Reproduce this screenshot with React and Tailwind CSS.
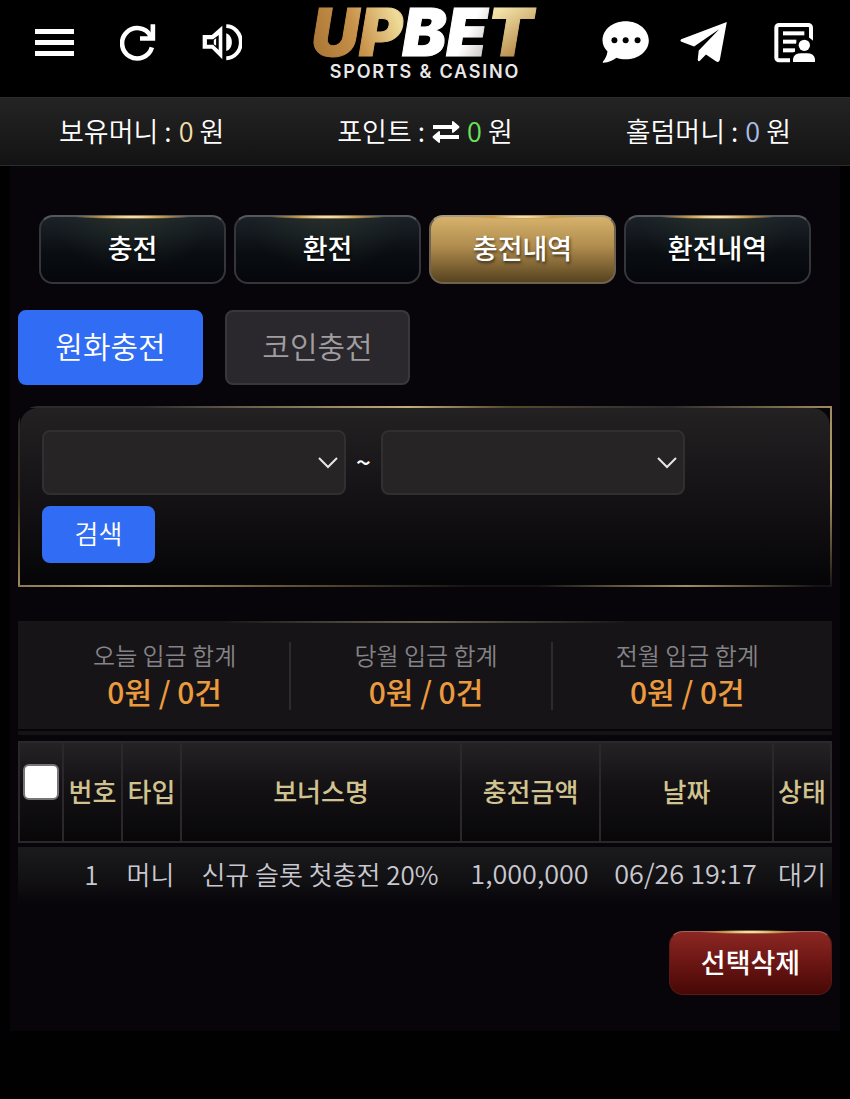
import { useState } from "react";

const TABS = ["충전", "환전", "충전내역", "환전내역"];

const SUMMARY = [
  { label: "오늘 입금 합계", value: "0원 / 0건" },
  { label: "당월 입금 합계", value: "0원 / 0건" },
  { label: "전월 입금 합계", value: "0원 / 0건" },
];

const COLUMNS = ["번호", "타입", "보너스명", "충전금액", "날짜", "상태"];

const ROWS = [
  { no: 1, type: "머니", bonus: "신규 슬롯 첫충전 20%", amount: "1,000,000", date: "06/26 19:17", status: "대기" },
];

// ── ICONS ─────────────────────────────────────────────────────
function MenuIcon() {
  return (
    <svg viewBox="0 0 40 28" className="w-10 h-7" fill="#fff" aria-hidden="true">
      <rect x="1" y="0" width="39" height="5" />
      <rect x="1" y="11" width="39" height="5" />
      <rect x="1" y="22" width="39" height="5" />
    </svg>
  );
}

function RefreshIcon() {
  return (
    <svg viewBox="0 0 108 112" className="w-9 h-[37px]" fill="none" stroke="#fff" strokeWidth="14" aria-hidden="true">
      <path d="M96 71A46 46 0 1 1 92 36" />
      <path d="M99 1V44H60" />
      <path d="M78 44L99 23V44Z" fill="#fff" stroke="none" />
    </svg>
  );
}

function SpeakerIcon() {
  return (
    <svg viewBox="0 0 122 118" className="w-10 h-[39px]" fill="#fff" aria-hidden="true">
      <path fillRule="evenodd" d="M2 36H30L62 8V110L30 78H2ZM15 49V66H34L51 82V36L34 49Z" />
      <path d="M36 51L43 46V69L36 64Z" />
      <path d="M74 31C84 34 91 45 91 58S84 82 74 85Z" />
      <path d="M74 9A40 44 0 0 1 74 107" fill="none" stroke="#fff" strokeWidth="12" />
    </svg>
  );
}

function ChatIcon() {
  return (
    <svg viewBox="0 0 144 130" className="w-12 h-[43px]" fill="#fff" aria-hidden="true">
      <path d="M71 1C32 1 1 26 1 59C1 72 7 83 16 92C15 105 8 115 2 123C1 125 2 126 4 126C20 125 34 119 43 111C52 114 61 116 71 116C110 116 141 91 141 59S110 1 71 1Z" />
      <circle cx="37" cy="58" r="9" fill="#000" />
      <circle cx="71" cy="58" r="9" fill="#000" />
      <circle cx="107" cy="58" r="9" fill="#000" />
    </svg>
  );
}

function PlaneIcon() {
  return (
    <svg viewBox="0 0 144 124" className="w-12 h-[41px]" fill="#fff" aria-hidden="true">
      <path d="M141 0L3 52Q-2 57 4 60L42 74L118 22L56 86L53 114Q55 122 61 116L78 98L108 119Q117 124 120 114Z" />
    </svg>
  );
}

function ProfileDocIcon() {
  return (
    <svg viewBox="0 0 126 120" className="w-[42px] h-10" fill="#fff" aria-hidden="true">
      <rect x="7" y="6" width="104" height="106" rx="8" fill="none" stroke="#fff" strokeWidth="12" />
      <rect x="27" y="25" width="64" height="12" />
      <rect x="27" y="50" width="40" height="12" />
      <rect x="27" y="76" width="36" height="12" />
      <path d="M48 120V104Q52 88 68 84A29 29 0 0 1 114 50L126 62V120Z" fill="#000" />
      <circle cx="91" cy="67" r="17" />
      <path d="M57 117V107Q61 91 82 91H99Q119 91 123 107V117Z" />
    </svg>
  );
}

function SwapIcon() {
  return (
    <svg viewBox="0 0 28 22" className="w-7 h-[22px]" fill="#fff" aria-hidden="true">
      <path d="M1 4H20V1Q20 0 21 0L27 5Q28 6 27 7L21 12Q20 12 20 11V8H1Z" />
      <path d="M27 14H8V11Q8 10 7 10L1 15Q0 16 1 17L7 22Q8 22 8 21V18H27Z" />
    </svg>
  );
}

// ── PIECES ────────────────────────────────────────────────────
function Logo() {
  return (
    <a href="#home" aria-label="UPBET Sports & Casino">
      <svg viewBox="0 0 250 80" className="w-[250px] h-20 font-['Inter',sans-serif]" textAnchor="middle">
        <defs>
          <linearGradient id="gold" gradientUnits="userSpaceOnUse" x1="10" y1="50" x2="115" y2="10">
            <stop offset="0" stopColor="#a87434" />
            <stop offset="0.45" stopColor="#c8924a" />
            <stop offset="0.85" stopColor="#efdc9a" />
            <stop offset="1" stopColor="#d8b46c" />
          </linearGradient>
          <linearGradient id="silver" gradientUnits="userSpaceOnUse" x1="110" y1="10" x2="200" y2="55">
            <stop offset="0.6" stopColor="#ffffff" />
            <stop offset="0.8" stopColor="#d6d1d1" />
            <stop offset="0.95" stopColor="#ffffff" />
          </linearGradient>
          <linearGradient id="bronze" gradientUnits="userSpaceOnUse" x1="195" y1="10" x2="225" y2="55">
            <stop offset="0" stopColor="#f3e2a8" />
            <stop offset="1" stopColor="#b0803f" />
          </linearGradient>
        </defs>
        <text x="122" y="53" className="text-[66px] font-black italic" strokeWidth="1">
          <tspan fill="url(#gold)" stroke="url(#gold)">UP</tspan>
          <tspan fill="url(#silver)" stroke="url(#silver)">BE</tspan>
          <tspan fill="url(#bronze)" stroke="url(#bronze)">T</tspan>
        </text>
        <text x="125" y="75" className="text-[18px] font-semibold tracking-widest" fill="#e8e8e8">
          SPORTS &amp; CASINO
        </text>
      </svg>
    </a>
  );
}

function IconButton({ label, className = "", children }) {
  return (
    <button type="button" aria-label={label} className={`flex items-center justify-center cursor-pointer ${className}`}>
      {children}
    </button>
  );
}

function Shine() {
  return (
    <span className="absolute inset-x-[18%] -top-[2px] h-1 bg-[radial-gradient(closest-side,#fff3cf_15%,#c79a4c_55%,transparent_100%)]" />
  );
}

function TabButton({ active, onClick, children }) {
  return (
    <button
      type="button"
      onClick={onClick}
      className={`relative flex-1 h-[69px] pb-[2px] rounded-[14px] border-2 text-[27px] font-medium text-white cursor-pointer [text-shadow:1px_2px_3px_rgba(0,0,0,0.6)] ${
        active
          ? "border-[#6f6350] border-t-[#a89a80] bg-[linear-gradient(#d6b26c,#b08c4e_45%,#57431f)]"
          : "border-[#34363a] border-t-[#55585d] bg-[radial-gradient(ellipse_at_top,rgba(44,54,46,0.6),transparent_60%),linear-gradient(#1b2228,#0a0e12_55%,#05060b)]"
      }`}
    >
      <Shine />
      {children}
    </button>
  );
}

function DateSelect({ label }) {
  return (
    <div className="relative w-[40%] max-w-[304px]">
      <select
        aria-label={label}
        className="block w-full h-[65px] px-4 rounded-lg border-2 border-[#312f30] bg-[#262425] text-[26px] text-white appearance-none"
      >
        <option value=""></option>
      </select>
      <svg viewBox="0 0 20 12" className="absolute right-2 top-[27px] w-5 h-3 pointer-events-none" fill="none" stroke="#e6e6e6" strokeWidth="2" aria-hidden="true">
        <path d="M1 1L10 10L19 1" />
      </svg>
    </div>
  );
}

function Balance({ label, amount, color, icon }) {
  return (
    <div className="flex items-center justify-center gap-[7px]">
      <span>{label} :</span>
      {icon}
      <span><span className={color}>{amount}</span> 원</span>
    </div>
  );
}

export default function App() {
  const [tab, setTab] = useState("충전내역");
  const [method, setMethod] = useState("원화충전");
  const [checked, setChecked] = useState(false);

  return (
    <div className="min-h-screen bg-[#020102] text-white font-['Noto_Sans_CJK_KR',sans-serif] font-[350]">
      {/* Header */}
      <header className="grid grid-cols-[1fr_auto_1fr] items-center h-[97px] px-[34px] pb-3 bg-black">
        <div className="flex items-center gap-11">
          <IconButton label="메뉴" className="w-10"><MenuIcon /></IconButton>
          <IconButton label="새로고침" className="w-10"><RefreshIcon /></IconButton>
          <IconButton label="소리" className="w-10"><SpeakerIcon /></IconButton>
        </div>
        <Logo />
        <div className="flex items-center justify-end gap-[30px]">
          <IconButton label="채팅" className="w-12"><ChatIcon /></IconButton>
          <IconButton label="텔레그램" className="w-12"><PlaneIcon /></IconButton>
          <IconButton label="내 정보" className="ml-4 w-[42px]"><ProfileDocIcon /></IconButton>
        </div>
      </header>

      {/* Balances */}
      <div className="grid grid-cols-3 h-[69px] border-y border-[#2c2b2c] bg-[linear-gradient(#252425,#141314)] text-[27px]">
        <Balance label="보유머니" amount="0" color="text-[#f2dfa6]" />
        <Balance label="포인트" amount="0" color="text-[#6be35a]" icon={<SwapIcon />} />
        <Balance label="홀덤머니" amount="0" color="text-[#a9bfe6]" />
      </div>

      <main className="mx-[10px] px-2 pt-[49px] pb-9 bg-[#070509]">
        <nav className="flex gap-2 px-[21px]">
          {TABS.map((name) => (
            <TabButton key={name} active={tab === name} onClick={() => setTab(name)}>
              {name}
            </TabButton>
          ))}
        </nav>

        <div className="flex gap-[22px] mt-[26px]">
          {["원화충전", "코인충전"].map((name) => (
            <button
              key={name}
              type="button"
              onClick={() => setMethod(name)}
              className={`w-[185px] h-[75px] pb-1 rounded-lg border-2 text-[30px] cursor-pointer ${
                method === name
                  ? "border-[#316df4] bg-[#316df4] text-white"
                  : "border-[#3a373a] bg-[#2b282d] text-[#a09ea1]"
              }`}
            >
              {name}
            </button>
          ))}
        </div>

        {/* Search */}
        <div className="mt-[21px] p-[2px] rounded-tl-[20px] bg-no-repeat bg-[linear-gradient(90deg,#2c2b2c_15%,#c4ae7a_48%,#57492e_60%,#2c2b2c_80%,#a08b5c_100%),linear-gradient(90deg,#8d7850,#b8a374_12%,#6e5c3a_30%,#151415_55%,#151415_64%,#a38e60_82%,#151415_98%),linear-gradient(#2c2b2c,#332d1a_50%,#a28a5a),linear-gradient(#a08b5c,#b8a06c_45%,#151415)] bg-[length:100%_2px,100%_2px,2px_100%,2px_100%] bg-[position:top,bottom,left,right]">
          <form
            onSubmit={(e) => e.preventDefault()}
            className="px-[22px] py-[22px] rounded-t-[18px] bg-[linear-gradient(#232122,#141214_50%,#050406)]"
          >
            <div className="flex items-center">
              <DateSelect label="시작일" />
              <span className="w-[35px] pb-1 text-center text-[26px] font-medium">~</span>
              <DateSelect label="종료일" />
            </div>
            <button
              type="submit"
              className="block mt-[11px] w-[113px] h-[57px] pb-1 rounded-lg bg-[#316df4] text-[26px] cursor-pointer"
            >
              검색
            </button>
          </form>
        </div>

        {/* Deposit totals */}
        <section className="mt-[34px] pt-[2px] bg-[linear-gradient(90deg,#171617_25%,#6a6250_50%,#171617_75%)]">
          <dl className="flex pl-[10px] pr-5 py-[19px] bg-[#161416]">
            {SUMMARY.map(({ label, value }) => (
              <div key={label} className="flex-1 h-[68px] pl-[10px] text-center border-l-2 border-[#2d2b2d] first:border-transparent">
                <dt className="text-[24px] leading-[26px] text-[#858387]">{label}</dt>
                <dd className="text-[30px] leading-[46px] font-medium text-[#eb9b3e]">{value}</dd>
              </div>
            ))}
          </dl>
        </section>

        {/* History */}
        <div className="mt-[2px] pt-[6px] border-t-4 border-[#151415]">
          <table className="w-full table-fixed border-separate border-spacing-0 text-[26px] whitespace-nowrap">
            <colgroup>
              <col className="w-[44px]" />
              <col className="w-[59px]" />
              <col className="w-[59px]" />
              <col />
              <col className="w-[139px]" />
              <col className="w-[173px]" />
              <col className="w-[60px]" />
            </colgroup>
            <thead>
              <tr className="h-[102px] bg-[linear-gradient(#252326,#131114_45%,#080708)] text-[#d0c38f]">
                <th className="p-0 pt-[21px] border-y-2 border-l-2 border-[#2a282a] align-top">
                  <input
                    type="checkbox"
                    aria-label="전체 선택"
                    checked={checked}
                    onChange={() => setChecked(!checked)}
                    className="block mx-auto w-9 h-9 rounded-md border-2 border-[#767676] bg-white appearance-none checked:bg-[#316df4]"
                  />
                </th>
                {COLUMNS.map((name) => (
                  <th key={name} className="p-0 pb-1 border-y-2 border-l-2 border-[#2a282a] font-medium last:border-r-2">
                    {name}
                  </th>
                ))}
              </tr>
            </thead>
            <tbody>
              {ROWS.map((row) => (
                <tr key={row.no} className="h-[62px] bg-[linear-gradient(#1c1b1d,#111013_60%,#070509)] text-center text-[#c9c8d0]">
                  <td className="p-0 border-t-4 border-[#070509]"></td>
                  <td className="p-0 pb-[6px] border-t-4 border-[#070509]">{row.no}</td>
                  <td className="p-0 pb-[6px] border-t-4 border-[#070509]">{row.type}</td>
                  <td className="p-0 pb-[6px] border-t-4 border-[#070509]">{row.bonus}</td>
                  <td className="p-0 pb-[6px] border-t-4 border-[#070509] text-[27px]">{row.amount}</td>
                  <td className="p-0 pb-[6px] border-t-4 border-[#070509] text-[27px]">{row.date}</td>
                  <td className="p-0 pb-[6px] border-t-4 border-[#070509]">{row.status}</td>
                </tr>
              ))}
            </tbody>
          </table>
        </div>

        <div className="flex justify-end mt-[26px]">
          <button
            type="button"
            className="relative w-[163px] h-[64px] pb-[2px] rounded-[14px] border border-[#5a1a18] border-t-[#a8625c] bg-[linear-gradient(#8c2723,#6b1613_50%,#470806)] text-[27px] font-medium cursor-pointer"
          >
            <Shine />
            선택삭제
          </button>
        </div>
      </main>
    </div>
  );
}
